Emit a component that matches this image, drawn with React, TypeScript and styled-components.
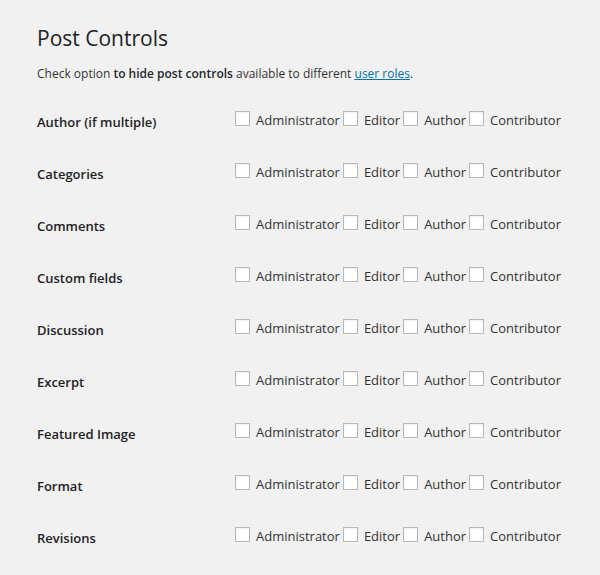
import React from "react";
import styled, { createGlobalStyle } from "styled-components";

const Global = createGlobalStyle`
  html, body {
    margin: 0;
    padding: 0;
    background: #f1f1f1;
  }
  body {
    font-family: "Open Sans", "Liberation Sans", sans-serif;
    color: #333;
    font-size: 13px;
  }
`;

const Page = styled.div`
  padding: 25px 20px 20px 37px;
`;

const Title = styled.h1`
  margin: 0;
  font-size: 21px;
  line-height: 27px;
  font-weight: 400;
  color: #1e2226;
`;

const Description = styled.p`
  margin: 13px 0 11px;
  font-size: 12px;
  line-height: 18px;
  color: #333;

  strong {
    font-weight: 600;
    color: #23282d;
  }

  a {
    color: #0073aa;
    text-decoration: underline;
  }
`;

const Table = styled.div`
  display: flex;
  flex-direction: column;
`;

const Row = styled.div`
  display: grid;
  grid-template-columns: 198px auto;
  height: 52px;
  align-items: start;
`;

const RowLabel = styled.div`
  padding-top: 19px;
  font-size: 13px;
  line-height: 18px;
  font-weight: 600;
  color: #1e2226;
`;

const Options = styled.div`
  display: flex;
  align-items: center;
  gap: 3px;
  padding-top: 17px;
`;

const Option = styled.label`
  display: inline-flex;
  align-items: center;
  font-size: 13px;
  line-height: 18px;
  color: #333;
  cursor: pointer;
`;

const Box = styled.input.attrs({ type: "checkbox" })`
  appearance: none;
  -webkit-appearance: none;
  width: 15px;
  height: 15px;
  margin: -3px 6px 0 0;
  border: 1px solid #b4b9be;
  background: #fff;
  box-shadow: inset 0 1px 2px rgba(0, 0, 0, 0.07);
  box-sizing: border-box;
  border-radius: 0;
  flex: none;
`;

const rows = [
  "Author (if multiple)",
  "Categories",
  "Comments",
  "Custom fields",
  "Discussion",
  "Excerpt",
  "Featured Image",
  "Format",
  "Revisions",
];

const roles = ["Administrator", "Editor", "Author", "Contributor"];

export default function App() {
  return (
    <>
      <Global />
      <Page>
        <Title>Post Controls</Title>
        <Description>
          Check option <strong>to hide post controls</strong> available to different{" "}
          <a href="#">user roles</a>.
        </Description>
        <Table>
          {rows.map((r) => (
            <Row key={r}>
              <RowLabel>{r}</RowLabel>
              <Options>
                {roles.map((role) => (
                  <Option key={role}>
                    <Box />
                    {role}
                  </Option>
                ))}
              </Options>
            </Row>
          ))}
        </Table>
      </Page>
    </>
  );
}
